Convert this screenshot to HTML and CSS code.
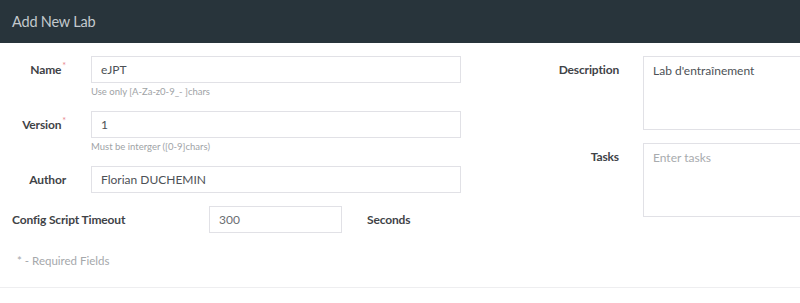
FILE: index.html
```html
<!DOCTYPE html>
<html lang="en">
<head>
    <meta charset="UTF-8">
    <meta name="viewport" content="width=device-width, initial-scale=1.0">
    <title>Add New Lab</title>
    <link rel="stylesheet" href="styles.css">
</head>
<body>
    <div class="panel">
        <div class="panel-heading">Add New Lab</div>
        <div class="panel-body">
            <div class="form-cols">
                <div class="col-left">
                    <div class="field">
                        <label class="field-label" for="name">Name<span class="req">*</span></label>
                        <div class="field-control">
                            <input type="text" id="name" class="form-input" value="eJPT">
                            <div class="help">Use only [A-Za-z0-9_- ]chars</div>
                        </div>
                    </div>
                    <div class="field">
                        <label class="field-label" for="version">Version<span class="req">*</span></label>
                        <div class="field-control">
                            <input type="text" id="version" class="form-input" value="1">
                            <div class="help">Must be interger ([0-9]chars)</div>
                        </div>
                    </div>
                    <div class="field">
                        <label class="field-label" for="author">Author</label>
                        <div class="field-control">
                            <input type="text" id="author" class="form-input" value="Florian DUCHEMIN">
                        </div>
                    </div>
                    <div class="field timeout-row">
                        <label class="timeout-label" for="timeout">Config Script Timeout</label>
                        <input type="text" id="timeout" class="form-input timeout-input" value="300">
                        <span class="unit">Seconds</span>
                    </div>
                </div>
                <div class="col-right">
                    <div class="field">
                        <label class="field-label wide" for="description">Description</label>
                        <textarea id="description" class="form-input area" spellcheck="false">Lab d'entraînement</textarea>
                    </div>
                    <div class="field">
                        <label class="field-label wide" for="tasks">Tasks</label>
                        <textarea id="tasks" class="form-input area" placeholder="Enter tasks"></textarea>
                    </div>
                </div>
            </div>
            <p class="required-note">* - Required Fields</p>
        </div>
        <div class="panel-footer"></div>
    </div>
</body>
</html>
```

FILE: styles.css
```css
html, body {
    margin: 0;
    height: 100%;
    overflow: hidden;
    background-color: #fff;
    font-family: "Lato", "Open Sans", sans-serif;
}
.panel {
    width: 800px;
    overflow: hidden;
}
.panel-heading {
    height: 43px;
    box-sizing: border-box;
    padding: 13px 12px 0;
    background-color: #28343b;
    color: #c3c9cd;
    font-size: 14.5px;
    letter-spacing: -0.2px;
    line-height: 18px;
}
.panel-body {
    padding: 13px 12px 0;
}
.form-cols {
    display: flex;
}
.col-left {
    width: 449px;
    flex-shrink: 0;
}
.col-right {
    margin-left: 19px;
}
.field {
    display: flex;
    align-items: flex-start;
    margin-bottom: 13px;
}
.field-label {
    width: 54px;
    flex-shrink: 0;
    margin-right: 25px;
    text-align: right;
    font-weight: bold;
    font-size: 12px;
    letter-spacing: -0.15px;
    line-height: 27px;
    color: #3f4347;
    white-space: nowrap;
}
.field-label.wide {
    width: 139px;
    margin-right: 24px;
}
.req {
    color: #e8868c;
    font-weight: normal;
    font-size: 9px;
    vertical-align: top;
    position: relative;
    top: -4px;
    margin-left: 1px;
}
.field-control {
    flex: 1;
}
.form-input {
    display: block;
    width: 100%;
    height: 27px;
    box-sizing: border-box;
    margin: 0;
    padding: 0 9px;
    border: 1px solid #e1e1e6;
    border-radius: 0;
    outline: none;
    background-color: #fff;
    font-family: inherit;
    font-size: 12px;
    color: #4d5156;
}
.help {
    margin-top: 2px;
    font-size: 9.5px;
    line-height: 13px;
    color: #a0a3a6;
}
.timeout-row {
    align-items: center;
}
.timeout-label {
    width: 197px;
    flex-shrink: 0;
    font-weight: bold;
    font-size: 12px;
    letter-spacing: -0.15px;
    color: #3f4347;
}
.timeout-input {
    width: 133px;
    flex-shrink: 0;
    color: #6a6e72;
}
.unit {
    margin-left: 25px;
    font-weight: bold;
    font-size: 12px;
    letter-spacing: -0.15px;
    color: #3f4347;
}
.area {
    width: 200px;
    flex-shrink: 0;
    height: 74px;
    padding: 6px 9px;
    resize: none;
    line-height: 15px;
}
.area::placeholder {
    color: #a8abae;
}
.required-note {
    margin: 8px 0 0 5px;
    font-size: 11.5px;
    color: #a5a8ab;
}
.panel-footer {
    margin-top: 20px;
    border-top: 1px solid #eeeef0;
}
```
